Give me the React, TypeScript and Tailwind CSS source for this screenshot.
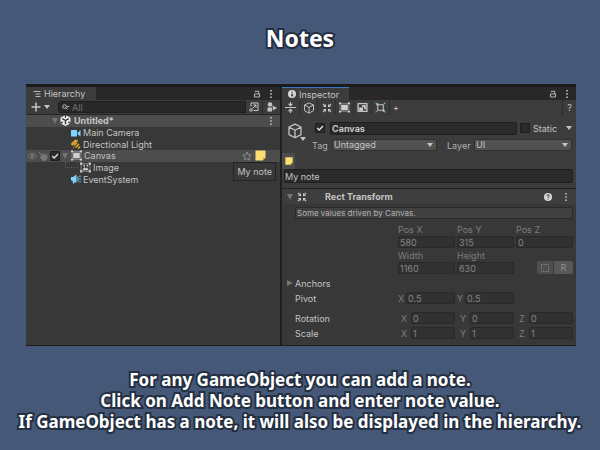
import type { ReactNode } from "react";

const OUTLINE =
  "font-['Noto_Sans','Open_Sans',sans-serif] font-bold text-white [-webkit-text-stroke:4px_#243042] [paint-order:stroke_fill]";

function Icon({ size = "size-[10px]", box = 20, children }: { size?: string; box?: number; children: ReactNode }) {
  return (
    <svg viewBox={`0 0 ${box} ${box}`} className={`${size} shrink-0`} fill="none" stroke="#c4c4c4" strokeWidth="2" aria-hidden="true">
      {children}
    </svg>
  );
}

function Caret({ tone = "fill-[#c4c4c4]" }: { tone?: string }) {
  return (
    <svg viewBox="0 0 6 4" className={`h-1 w-1.5 shrink-0 ${tone}`} aria-hidden="true">
      <path d="M0 0h6L3 4z" />
    </svg>
  );
}

function Fold() {
  return (
    <svg viewBox="0 0 6 6" className="size-1.5 shrink-0 fill-[#747474]" aria-hidden="true">
      <path d="M0 0h6L3 6z" />
    </svg>
  );
}

function Dots() {
  return (
    <svg viewBox="0 0 4 10" className="h-[10px] w-1 shrink-0 fill-[#c4c4c4]" aria-hidden="true">
      <path d="M1.200 1h1.600v1.600H1.200zM1.200 4.200h1.600v1.600H1.200zM1.200 7.400h1.600V9H1.200z" />
    </svg>
  );
}

function Lock() {
  return (
    <Icon size="size-2" box={16}>
      <path d="M3 8h10v6H3zM4.500 4.500V2.500h7V8" strokeWidth="1.800" />
    </Icon>
  );
}

function Cube({ size }: { size: string }) {
  return (
    <Icon size={size}>
      <path d="M10 1.500l7.500 3.500v9.500L10 18.500l-7.500-4V5zM2.500 5L10 9l7.500-4M10 9v9.500" strokeWidth="1.600" strokeLinejoin="round" />
    </Icon>
  );
}

function RectTransformIcon() {
  return (
    <Icon>
      <path d="M2 2l3 3M18 2l-3 3M2 18l3-3M18 18l-3-3" strokeWidth="2.500" />
      <path d="M8 2v6H2zM12 2v6h6zM8 18v-6H2zM12 18v-6h6z" fill="#d0d0d0" stroke="none" />
    </Icon>
  );
}

function CanvasIcon() {
  return (
    <Icon size="size-[11px]">
      <path d="M2 3h16v14H2z" stroke="#8c8c8c" strokeWidth="1.600" />
      <path d="M4 5h12v10H4zM0 1h4v3H0zM16 1h4v3h-4zM0 16h4v3H0zM16 16h4v3h-4z" fill="#cfcfcf" stroke="none" />
    </Icon>
  );
}

function NoteIcon({ size }: { size: string }) {
  return (
    <svg viewBox="0 0 12 12" className={`${size} shrink-0`} aria-hidden="true">
      <path d="M.5.5h11v8l-3 3h-8z" fill="#fbdf72" />
      <path d="M8.500 11.500v-3h3z" fill="#c79b2c" />
    </svg>
  );
}

function Check({ name, checked, size = "size-[10px]" }: { name: string; checked?: boolean; size?: string }) {
  return (
    <span className={`grid ${size} shrink-0`}>
      <input
        type="checkbox"
        aria-label={name}
        defaultChecked={checked}
        className="peer col-start-1 row-start-1 size-full appearance-none rounded-[1px] border border-[#1e1e1e] bg-[#2a2a2a]"
      />
      <svg
        viewBox="0 0 10 10"
        className="pointer-events-none invisible col-start-1 row-start-1 size-full peer-checked:visible"
        fill="none"
        stroke="#e0e0e0"
        strokeWidth="1.400"
        aria-hidden="true"
      >
        <path d="M2.200 5l2 2 3.800-4" />
      </svg>
    </span>
  );
}

function HierarchyTab() {
  return (
    <div className="flex h-[13px] items-center bg-[#282828] pr-[7px]">
      <h2 className="flex h-full w-[70px] items-center gap-[3px] bg-[#3c3c3c] pl-[7px]">
        <Icon size="size-2" box={16}>
          <path d="M1 3h14M5 8h10M5 13h10" strokeWidth="1.800" />
        </Icon>
        Hierarchy
      </h2>
      <span className="ml-auto flex items-center gap-2">
        <Lock />
        <Dots />
      </span>
    </div>
  );
}

function HierarchyBar() {
  return (
    <div className="flex h-[15px] items-center border-b border-[#232323] bg-[#3c3c3c] pl-[5px]">
      <button type="button" aria-label="Create" className="flex items-center gap-[3px]">
        <Icon>
          <path d="M10 1v18M1 10h18" strokeWidth="3" />
        </Icon>
        <Caret />
      </button>
      <label className="ml-2 flex h-3 min-w-0 flex-1 items-center gap-[2px] rounded-l-[3px] border border-[#202020] bg-[#282828] pl-[3px]">
        <Icon size="size-2" box={16}>
          <circle cx="5" cy="7" r="3.500" />
          <path d="M8 10l3 3" />
          <path d="M9 6h6l-3 3z" fill="#c4c4c4" stroke="none" />
        </Icon>
        <input
          aria-label="Search"
          placeholder="All"
          className="min-w-0 flex-1 bg-transparent placeholder:text-[#747474]"
        />
      </label>
      <button type="button" aria-label="Open search" className="flex w-4 justify-center">
        <Icon>
          <path d="M4 9V2h14v15H9M7 13l7-7M8.500 6H14v5.500" />
          <circle cx="4" cy="16" r="2.500" />
        </Icon>
      </button>
      <button type="button" aria-label="Filter" className="flex h-full w-[18px] items-center justify-center border-l border-[#2a2a2a]">
        <Icon>
          <g fill="#c4c4c4" stroke="none">
            <circle cx="6" cy="5" r="4.500" />
            <path d="M1 11h9v8H1zM11 7l9 5-8 5z" />
          </g>
        </Icon>
      </button>
    </div>
  );
}

function Row({ children, tone = "" }: { children: ReactNode; tone?: string }) {
  return <li className={`relative flex min-h-0 flex-1 items-center gap-[2px] ${tone}`}>{children}</li>;
}

function Hierarchy() {
  return (
    <section className="min-w-0 bg-[#383838]">
      <HierarchyTab />
      <HierarchyBar />
      <ul className="flex h-[70px] flex-col">
        <Row tone="bg-[#4d4d4d] pl-[26px] pr-[7px] font-bold">
          <Fold />
          <Icon size="size-[11px]">
            <path d="M10 0l9 5v10l-9 5-9-5V5z" fill="#f0f0f0" stroke="none" />
            <path d="M10 10v7M10 10L4 6.500M10 10l6-3.500M10 0v5M1 15l4-2.500M19 15l-4-2.500" stroke="#333" strokeWidth="2.500" />
          </Icon>
          <span className="ml-px">Untitled*</span>
          <span className="ml-auto">
            <Dots />
          </span>
        </Row>
        <Row tone="pl-[45px]">
          <Icon>
            <path d="M0 4h12v13H0zM13 10l6-6v13l-6-5z" fill="#7fd6fd" stroke="none" />
          </Icon>
          Main Camera
        </Row>
        <Row tone="pl-[45px]">
          <Icon>
            <path d="M1 10L9 2l2 2-8 8zM11 5l3-2" stroke="#e7ad29" strokeWidth="2.200" />
            <path d="M6 13l6-6M9 17l7-7M14 19l4-4M5 16l1 1" stroke="#e7ad29" strokeWidth="3" />
          </Icon>
          Directional Light
        </Row>
        <Row tone="bg-[#4d4d4d]">
          <span className="flex w-[22px] shrink-0 items-center gap-px pl-px">
            <Icon>
              <path d="M1 10q9-11 18 0q-9 11-18 0z" stroke="#777" />
              <circle cx="10" cy="10" r="3.500" fill="#777" stroke="none" />
            </Icon>
            <Icon>
              <path d="M2 2l6 7M7 9h11v6l-4 4h-4l-5-6zM9 9V5M13 9V5M17 10V6" stroke="#777" fill="#777" />
            </Icon>
          </span>
          <Check name="Active in scene" checked />
          <Fold />
          <span className="ml-px">
            <CanvasIcon />
          </span>
          Canvas
          <span className="ml-auto flex items-center gap-[3px] pr-[14px]">
            <Icon>
              <path d="M10 2l2.500 5.500 6 .7-4.400 4 1.200 6L10 15.200l-5.300 3 1.200-6-4.400-4 6-.7z" stroke="#9a9a9a" strokeWidth="1.600" />
            </Icon>
            <NoteIcon size="size-[11px]" />
          </span>
          <span
            role="tooltip"
            className="absolute top-3 right-1 z-10 border border-[#222] bg-[#383838] px-[3px] py-[2px] leading-[13px] whitespace-nowrap"
          >
            My note
          </span>
        </Row>
        <Row tone="pl-[39px]">
          <span className="mb-[6px] h-[6px] w-[13px] border-b border-l border-dotted border-[#5c5c5c]" />
          <Icon size="size-[11px]">
            <path d="M2 3h16v14H2z" stroke="#8c8c8c" strokeWidth="1.600" />
            <path
              d="M0 1h4v4H0zM16 1h4v4h-4zM0 15h4v4H0zM16 15h4v4h-4zM4 15l4-6 3 3 2-2 3 5zM6 5h3v3H6zM12 5h3v3h-3z"
              fill="#cfcfcf"
              stroke="none"
            />
          </Icon>
          Image
        </Row>
        <Row tone="pl-[45px]">
          <Icon>
            <path d="M0 6h4l7-5v17l-7-5H0zM3 13h4v6H4z" fill="#7fd6fd" stroke="none" />
            <path d="M14 5v10M18 3v3M18 8.500v3M18 14v3" stroke="#7fd6fd" />
          </Icon>
          EventSystem
        </Row>
      </ul>
    </section>
  );
}

function Tool({ name, children }: { name: string; children: ReactNode }) {
  return (
    <button type="button" aria-label={name} className="flex h-full w-[18px] items-center justify-center border-r border-[#303030]">
      {children}
    </button>
  );
}

function InspectorTop() {
  return (
    <>
      <div className="flex h-[13px] items-center bg-[#282828] pr-[7px]">
        <h2 className="flex h-full w-[67px] items-center gap-[3px] border-t border-[#3a79bb] bg-[#3c3c3c] pl-[6px]">
          <svg viewBox="0 0 16 16" className="size-2 shrink-0" aria-hidden="true">
            <circle cx="8" cy="8" r="8" fill="#d8d8d8" />
            <path d="M7 3h2.500v2.200H7zM6 7h3.500v4H11v1.500H6V11h1V8.500H6z" fill="#333" />
          </svg>
          Inspector
        </h2>
        <span className="ml-auto flex items-center gap-2">
          <Lock />
          <Dots />
        </span>
      </div>
      <div className="flex h-[15px] items-center bg-[#3c3c3c]">
        <Tool name="Collapse all">
          <Icon size="size-[11px]">
            <path d="M0 10h20M10 0v4M10 20v-4" />
            <path d="M5 3h10l-5 5zM5 17h10l-5-5z" fill="#c4c4c4" stroke="none" />
          </Icon>
        </Tool>
        <Tool name="GameObject">
          <Cube size="size-3" />
        </Tool>
        <Tool name="Rect Transform">
          <RectTransformIcon />
        </Tool>
        <Tool name="Canvas">
          <CanvasIcon />
        </Tool>
        <Tool name="Canvas Scaler">
          <Icon size="size-[11px]">
            <path d="M1 3h18M2 3v14h16V3" strokeWidth="2.500" />
            <path d="M4 10h7v6H4zM9 6h7v7h-3V9H9z" fill="#cfcfcf" stroke="none" />
          </Icon>
        </Tool>
        <Tool name="Graphic Raycaster">
          <Icon size="size-[11px]">
            <path d="M5 5h10v10H5z" />
            <path d="M2 5h3M5 2v3M15 15h3M15 15v3" />
            <path d="M1 1l3 3M16 4l3-3M1 19l3-3M16 16l3 3" stroke="#5fb4dc" />
          </Icon>
        </Tool>
        <button type="button" aria-label="Add component" className="w-3 text-center">
          +
        </button>
        <button type="button" aria-label="Help" className="ml-auto h-full w-[14px] border-l border-[#2a2a2a] text-center">
          ?
        </button>
      </div>
    </>
  );
}

function Dropdown({ label, value, wide }: { label: string; value: string; wide: string }) {
  return (
    <label className={`grid min-w-0 ${wide} items-center`}>
      <select
        aria-label={label}
        defaultValue={value}
        className="col-start-1 row-start-1 h-3 w-full appearance-none rounded-[2px] border border-[#303030] bg-[#515151] pl-px leading-[10px]"
      >
        <option>{value}</option>
      </select>
      <span className="pointer-events-none col-start-1 row-start-1 mr-1 justify-self-end">
        <Caret />
      </span>
    </label>
  );
}

function ObjectHeader() {
  return (
    <div className="flex gap-[6px] bg-[#3c3c3c] pt-[6px] pr-1 pl-[5px]">
      <button type="button" aria-label="Object icon" className="relative flex w-[19px] items-end pb-3">
        <Cube size="size-4" />
        <span className="absolute right-0 bottom-[10px] flex">
          <Caret />
        </span>
      </button>
      <div className="flex min-w-0 flex-1 flex-col gap-[4px]">
        <div className="flex h-[14px] items-center pl-[3px]">
          <span className="w-[15px]">
            <Check name="Active" checked />
          </span>
          <input
            aria-label="Name"
            defaultValue="Canvas"
            className="h-[13px] min-w-0 flex-1 rounded-[2px] border border-[#1f1f1f] bg-[#2a2a2a] px-px font-bold"
          />
          <span className="ml-[3px] flex w-[52px] items-center gap-[3px]">
            <Check name="Static" />
            Static
            <span className="ml-auto">
              <Caret />
            </span>
          </span>
        </div>
        <div className="flex items-center">
          <span className="w-5 text-[#b0b0b0]">Tag</span>
          <Dropdown label="Tag" value="Untagged" wide="flex-[105]" />
          <span className="ml-[10px] w-[27px] text-[#b0b0b0]">Layer</span>
          <Dropdown label="Layer" value="UI" wide="flex-[98]" />
        </div>
      </div>
    </div>
  );
}

function Field({ name, value }: { name: string; value: string }) {
  return (
    <input
      aria-label={name}
      defaultValue={value}
      className="h-3 w-full min-w-0 rounded-[2px] border border-[#292929] bg-[#313131] px-px text-[#858585]"
    />
  );
}

function Stacked({ name, value }: { name: string; value: string }) {
  return (
    <label className="flex min-w-0 flex-col">
      <span className="h-[13px] leading-[13px]">{name}</span>
      <Field name={name} value={value} />
    </label>
  );
}

function Axis({ group, axis, value, inset }: { group: string; axis: string; value: string; inset: string }) {
  return (
    <label className="flex min-w-0 items-center">
      <span className={`shrink-0 ${inset}`}>{axis}</span>
      <Field name={`${group} ${axis}`} value={value} />
    </label>
  );
}

const GRID = "grid grid-cols-[101px_1fr_1fr_1fr] gap-x-[2px] items-center text-[#7d7d7d]";

function VectorRow({ name, values, inset }: { name: string; values: string[]; inset: string }) {
  return (
    <div className={GRID}>
      <span className="text-[#c4c4c4]">{name}</span>
      {values.map((v, i) => (
        <Axis key={i} group={name} axis={"XYZ"[i]} value={v} inset={inset} />
      ))}
    </div>
  );
}

function RectTransform() {
  return (
    <>
      <div className="flex h-4 items-center border-t border-[#222] bg-[#3e3e3e] pr-2 pl-[5px] font-bold">
        <Fold />
        <span className="ml-1">
          <RectTransformIcon />
        </span>
        <h3 className="ml-[18px]">Rect Transform</h3>
        <span className="ml-auto flex items-center gap-3">
          <svg viewBox="0 0 16 16" className="size-2" aria-hidden="true">
            <circle cx="8" cy="8" r="8" fill="#d8d8d8" />
            <path d="M5.500 6q0-2.500 2.500-2.500T10.500 6Q10.500 7.500 8 8.500V10M8 11.200v2" stroke="#333" strokeWidth="1.800" fill="none" />
          </svg>
          <Dots />
        </span>
      </div>
      <div className="flex flex-col pt-[3px] pr-[3px] pb-[6px] pl-[13px]">
        <p className="h-3 rounded-[2px] border border-[#2a2a2a] bg-[#404040] pl-px text-[8px] leading-[10px] text-[#b4b4b4]">
          Some values driven by Canvas.
        </p>
        <div className={`${GRID} mt-1`}>
          <span />
          <Stacked name="Pos X" value="580" />
          <Stacked name="Pos Y" value="315" />
          <Stacked name="Pos Z" value="0" />
        </div>
        <div className={`${GRID} mt-px`}>
          <span />
          <Stacked name="Width" value="1160" />
          <Stacked name="Height" value="630" />
          <div className="flex h-[13px] justify-end gap-px self-end">
            <button type="button" aria-label="Blueprint mode" className="flex w-4 items-center justify-center rounded-l-[2px] bg-[#4e4e4e]">
              <svg viewBox="0 0 16 16" className="size-2" fill="none" stroke="#909090" strokeWidth="2" aria-hidden="true">
                <path d="M1 1h14v14H1z" strokeDasharray="2 2.600" />
              </svg>
            </button>
            <button type="button" aria-label="Raw edit mode" className="w-[19px] rounded-r-[2px] bg-[#585858] text-[#909090]">
              R
            </button>
          </div>
        </div>
        <div className="mt-[3px] -ml-2 flex h-3 items-center gap-[2px]">
          <svg viewBox="0 0 6 6" className="size-1.5 fill-[#747474]" aria-hidden="true">
            <path d="M0 0l6 3-6 3z" />
          </svg>
          Anchors
        </div>
        <div className="mt-[3px]">
          <VectorRow name="Pivot" values={["0.5", "0.5"]} inset="w-2" />
        </div>
        <div className="mt-2 flex flex-col gap-[3px]">
          <VectorRow name="Rotation" values={["0", "0", "0"]} inset="w-[13px] pl-[3px]" />
          <VectorRow name="Scale" values={["1", "1", "1"]} inset="w-[13px] pl-[3px]" />
        </div>
      </div>
    </>
  );
}

function Inspector() {
  return (
    <section className="min-w-0 bg-[#383838]">
      <InspectorTop />
      <ObjectHeader />
      <div className="bg-[#3c3c3c] pt-[2px] pb-[5px]">
        <button type="button" aria-label="Note" className="flex h-4 w-[13px] items-center justify-center bg-[#4c4c4c]">
          <NoteIcon size="size-2" />
        </button>
        <div className="pr-[3px] pl-[2px]">
          <input
            aria-label="Note text"
            defaultValue="My note"
            className="block h-[14px] w-full rounded-[2px] border border-[#1f1f1f] bg-[#2a2a2a]"
          />
        </div>
      </div>
      <RectTransform />
    </section>
  );
}

export default function App() {
  return (
    <main className="flex min-h-screen flex-col bg-[#465878]">
      <h1 className={`pt-[22px] text-center text-[23px] leading-[32px] ${OUTLINE}`}>Notes</h1>
      <div className="mt-[30px] mr-6 ml-[26px] grid grid-cols-[254fr_294fr] gap-[2px] border-t-[3px] border-b border-[#1b1b1b] bg-[#1f1f1f] font-[Inter,sans-serif] text-[9px] leading-[11px] text-[#c4c4c4]">
        <Hierarchy />
        <Inspector />
      </div>
      <p className={`mt-[23px] text-center text-[17px] leading-[21px] ${OUTLINE}`}>
        For any GameObject you can add a note.
        <br />
        Click on Add Note button and enter note value.
        <br />
        If GameObject has a note, it will also be displayed in the hierarchy.
      </p>
    </main>
  );
}
